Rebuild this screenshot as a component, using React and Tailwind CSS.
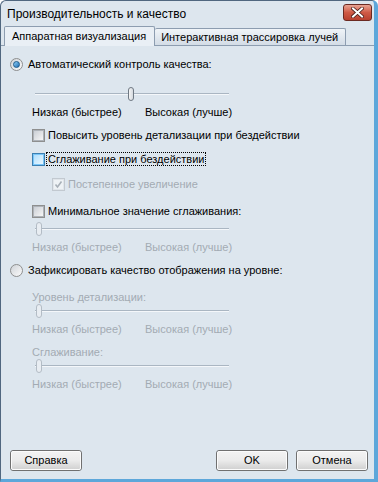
import React from 'react';

const font = { fontFamily: '"Liberation Sans", Arial, sans-serif' };

const Checkbox = ({ hover, disabled, checked }) => (
  <span
    className={`w-[13px] h-[13px] shrink-0 border flex items-center justify-center ${
      hover ? 'border-[#3c7fb1]' : disabled ? 'border-[#c2c9d0]' : 'border-[#8e8f8f]'
    }`}
  >
    <span
      className={`w-[11px] h-[11px] border flex items-center justify-center ${
        hover
          ? 'border-[#79c6f9] bg-gradient-to-br from-[#b1dffd] to-[#e9f7fe]'
          : disabled
          ? 'border-[#e0e5ea] bg-[#eef2f5]'
          : 'border-[#aeb3b9] bg-gradient-to-br from-[#cbcfd5] to-[#f6f6f6]'
      }`}
    >
      {checked && (
        <svg width="9" height="9" viewBox="0 0 9 9">
          <path d="M1.5 4.5 L3.5 7 L7.5 1.5" fill="none" stroke="#a8b0b8" strokeWidth="1.6" />
        </svg>
      )}
    </span>
  </span>
);

const Radio = ({ checked }) => (
  <span className="w-[13px] h-[13px] shrink-0 rounded-full border border-[#8e8f8f] bg-gradient-to-br from-[#cfd3d8] to-[#fbfbfb] flex items-center justify-center">
    {checked && (
      <span className="w-[7px] h-[7px] rounded-full border border-[#1b5a8c] bg-gradient-to-br from-[#8fd0f7] to-[#1c6fb3]" />
    )}
  </span>
);

const Slider = ({ pos, disabled }) => (
  <div className="relative ml-[34px] w-[194px] h-[14px]">
    <div className="absolute left-0 right-0 top-[6px] h-[1px] bg-[#aab6c2]" />
    <div className="absolute left-0 right-0 top-[7px] h-[1px] bg-[#f4f7fa]" />
    <div
      className={`absolute top-0 w-[6px] h-[14px] rounded-[3px] border ${
        disabled ? 'border-[#b3bcc5] bg-[#e8edf2]' : 'border-[#6f7983] bg-gradient-to-r from-[#f5f5f5] to-[#d6dbe0]'
      }`}
      style={{ left: pos }}
    />
  </div>
);

const Scale = ({ disabled }) => (
  <div className={`flex ml-[31px] h-[14px] leading-[14px] ${disabled ? 'text-[#a3abb3]' : 'text-black'}`}>
    <span className="w-[113px]">Низкая (быстрее)</span>
    <span>Высокая (лучше)</span>
  </div>
);

const Button = ({ children, className }) => (
  <button
    className={`h-[21px] w-[72px] rounded-[3px] border border-[#707070] p-0 ${className}`}
  >
    <span className="flex items-center justify-center w-full h-full rounded-[2px] border border-[#fbfbfb] bg-gradient-to-b from-[#f2f2f2] via-[#ebebeb] to-[#d2d2d2] text-[11px] text-black">
      {children}
    </span>
  </button>
);

export default function App() {
  return (
    <div
      className="w-[378px] h-[482px] flex flex-col bg-[#dde6ee] border-l border-t border-[#50677f] border-r-[4px] border-r-[#5da7da] border-b-[3px] border-b-[#5da7da] rounded-t-[6px] overflow-hidden text-[11px] text-black"
      style={font}
    >
      {/* Title bar */}
      <div className="h-[25px] flex items-center justify-between pl-[6px] pr-[2px]">
        <span className="text-[12px]">Производительность и качество</span>
        <span className="w-[29px] h-[17px] -mt-[3px] rounded-[3px] border border-[#6b2a22] bg-gradient-to-b from-[#e8a393] via-[#cf5a46] to-[#b8402f] flex items-center justify-center">
          <svg width="13" height="11" viewBox="0 0 13 11">
            <path d="M2 1.5 L11 9.5 M11 1.5 L2 9.5" stroke="#4a1d18" strokeWidth="3.6" strokeLinecap="square" />
            <path d="M2 1.5 L11 9.5 M11 1.5 L2 9.5" stroke="#ffffff" strokeWidth="2" strokeLinecap="square" />
          </svg>
        </span>
      </div>

      {/* Tabs */}
      <div className="h-[19px] flex items-end pl-[3px]">
        <div className="relative z-10 -mb-px h-[20px] pl-[7px] pr-[8px] flex items-center rounded-t-[2px] border border-b-0 border-[#8d9db0] bg-[#e9eff5]">
          Аппаратная визуализация
        </div>
        <div className="h-[17px] pl-[6px] pr-[7px] flex items-center rounded-t-[2px] border border-l-0 border-b-0 border-[#8d9db0] bg-gradient-to-b from-[#f0f4f8] to-[#d3dce6]">
          Интерактивная трассировка лучей
        </div>
      </div>

      {/* Panel */}
      <div className="flex-1 border-t border-[#8d9db0] flex flex-col">
        <div className="flex items-center h-[14px] mt-[11px] ml-[9px] gap-[5px]">
          <Radio checked />
          <span>Автоматический контроль качества:</span>
        </div>
        <div className="mt-[16px]">
          <Slider pos={93} />
        </div>
        <div className="mt-[4px]">
          <Scale />
        </div>
        <div className="flex items-center h-[14px] mt-[9px] ml-[31px] gap-[3px]">
          <Checkbox />
          <span>Повысить уровень детализации при бездействии</span>
        </div>
        <div className="flex items-center h-[14px] mt-[10px] ml-[31px] gap-[1px]">
          <Checkbox hover />
          <span className="border border-dotted border-black px-[1px] leading-[12px]">Сглаживание при бездействии</span>
        </div>
        <div className="flex items-center h-[14px] mt-[11px] ml-[51px] gap-[3px] text-[#a3abb3]">
          <Checkbox disabled checked />
          <span>Постепенное увеличение</span>
        </div>
        <div className="flex items-center h-[14px] mt-[13px] ml-[31px] gap-[3px]">
          <Checkbox />
          <span>Минимальное значение сглаживания:</span>
        </div>
        <div className="mt-[4px]">
          <Slider pos={1} disabled />
        </div>
        <div className="mt-[4px]">
          <Scale disabled />
        </div>
        <div className="flex items-center h-[14px] mt-[9px] ml-[9px] gap-[5px]">
          <Radio />
          <span>Зафиксировать качество отображения на уровне:</span>
        </div>
        <div className="mt-[13px] ml-[31px] h-[14px] leading-[14px] text-[#a3abb3]">Уровень детализации:</div>
        <Slider pos={1} disabled />
        <div className="mt-[4px]">
          <Scale disabled />
        </div>
        <div className="mt-[9px] ml-[31px] h-[14px] leading-[14px] text-[#a3abb3]">Сглаживание:</div>
        <Slider pos={1} disabled />
        <div className="mt-[4px]">
          <Scale disabled />
        </div>
      </div>

      {/* Buttons */}
      <div className="flex items-center pl-[9px] pr-[6px] pb-[8px]">
        <Button>Справка</Button>
        <div className="flex-1" />
        <Button className="mr-[8px]">OK</Button>
        <Button>Отмена</Button>
      </div>
    </div>
  );
}
